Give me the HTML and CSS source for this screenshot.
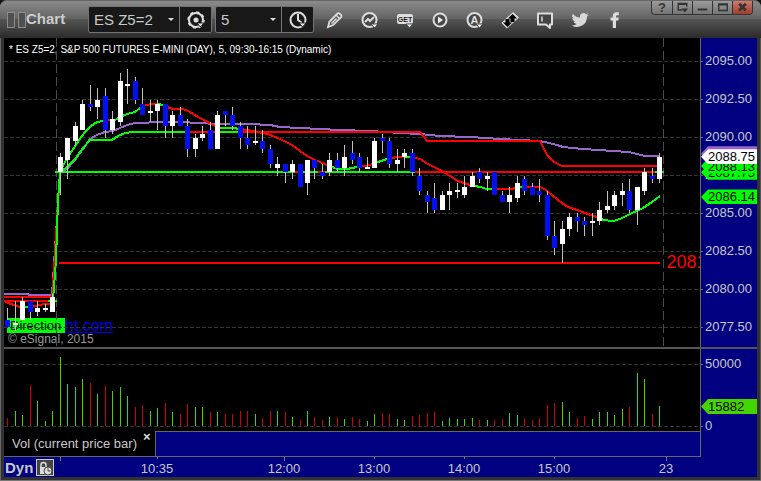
FILE: index.html
```html
<!DOCTYPE html>
<html lang="en">
<head>
    <meta charset="UTF-8">
    <meta name="viewport" content="width=device-width, initial-scale=1.0">
    <title>Chart</title>
    <link rel="stylesheet" href="styles.css">
</head>
<body>
    <div class="window">
        <header class="toolbar">
            <span class="grip"></span>
            <h1 class="title">Chart</h1>

            <div class="combo symbol">
                <select aria-label="Symbol">
                    <option>ES Z5=2</option>
                </select>
                <svg class="caret" viewBox="0 0 6 3"><path d="M0 0h6L3 3z"/></svg>
                <button class="combo-btn" aria-label="Symbol settings">
                    <svg class="icon" viewBox="0 0 20 20">
                        <circle cx="10" cy="10" r="7" fill="none" stroke="#ddd" stroke-width="2"/>
                        <circle cx="10" cy="10" r="8" fill="none" stroke="#ddd" stroke-width="1.500" stroke-dasharray="3.200 3.080"/>
                        <circle cx="10" cy="10" r="2.500" fill="#ddd"/>
                        <path d="M11 13h7l-3.500 4z" fill="#fff" stroke="#181818"/>
                    </svg>
                </button>
            </div>

            <div class="combo interval">
                <select aria-label="Interval">
                    <option>5</option>
                </select>
                <svg class="caret" viewBox="0 0 6 3"><path d="M0 0h6L3 3z"/></svg>
                <button class="combo-btn" aria-label="Time template">
                    <svg class="icon" viewBox="0 0 20 20">
                        <circle cx="10" cy="10" r="7.500" fill="none" stroke="#ddd" stroke-width="2"/>
                        <path d="M10 4v6l4 3" fill="none" stroke="#ddd" stroke-width="2"/>
                        <path d="M11 13h7l-3.500 4z" fill="#fff" stroke="#181818"/>
                    </svg>
                </button>
            </div>

            <nav class="tools">
                <button aria-label="Draw">
                    <svg class="icon" viewBox="0 0 20 20">
                        <path d="M3 17l1.500-5.500 8-8q1-.8 2 0l1.600 1.600q.8 1 0 2l-8 8z" fill="#555" stroke="#ddd" stroke-width="1.800"/>
                        <path d="M11 5l4 4M6.500 13.500l5-5" stroke="#ddd" stroke-width="1.500"/>
                    </svg>
                </button>
                <button aria-label="Studies">
                    <svg class="icon" viewBox="0 0 20 20">
                        <circle cx="9.500" cy="10" r="7" fill="#484848" stroke="#ddd" stroke-width="2"/>
                        <path d="M5 12l3-3 2 2 4-4" fill="none" stroke="#ddd" stroke-width="2"/>
                        <path d="M11 14h7l-3.500 4z" fill="#fff" stroke="#444"/>
                    </svg>
                </button>
                <button aria-label="Get study">
                    <svg class="icon" viewBox="0 0 20 20">
                        <rect x="2" y="4" width="16" height="10" rx="2" fill="#ddd"/>
                        <text x="10" y="12" class="glyph get">GET</text>
                        <path d="M11 14h7l-3.500 4z" fill="#fff" stroke="#444"/>
                    </svg>
                </button>
                <button aria-label="Play">
                    <svg class="icon" viewBox="0 0 20 20">
                        <circle cx="10" cy="10" r="6.500" fill="#484848" stroke="#ddd" stroke-width="2"/>
                        <path d="M8 6.500v7l5-3.500z" fill="#eee"/>
                    </svg>
                </button>
                <button aria-label="Alerts">
                    <svg class="icon" viewBox="0 0 20 20">
                        <circle cx="9.500" cy="10" r="7" fill="#484848" stroke="#ddd" stroke-width="2"/>
                        <text x="9.500" y="14" class="glyph letter">A</text>
                        <path d="M11 14h7l-3.500 4z" fill="#fff" stroke="#444"/>
                    </svg>
                </button>
                <button aria-label="Trade">
                    <svg class="icon" viewBox="0 0 20 20">
                        <path d="M2.500 13L13 3l5 4.500L7 17.500z" fill="#ccc" stroke="#ddd" stroke-width="1.500" stroke-linejoin="round"/>
                        <path d="M12.500 4l4.500 4.500h-2.500v3.500h-4v-3.500H8zM7.500 17L3 12.500h2.500V9h4v3.500H12z" fill="#000"/>
                    </svg>
                </button>
                <button aria-label="Comment">
                    <svg class="icon" viewBox="0 0 20 20">
                        <path d="M3 3.500h14v11h-2v3.500l-4-3.500H3z" fill="#444" stroke="#ddd" stroke-width="2" stroke-linejoin="round"/>
                        <path d="M7 6.500v5" stroke="#ddd" stroke-width="1.500"/>
                    </svg>
                </button>
                <button aria-label="Twitter">
                    <svg class="icon" viewBox="0 0 24 24">
                        <path fill="#d8d8d8" d="M22.500 5.600c-.8.400-1.600.6-2.400.7.900-.5 1.500-1.300 1.900-2.300-.8.500-1.700.8-2.700 1a4.200 4.200 0 0 0-7.200 3.900C8.600 8.700 5.500 7 3.400 4.400a4.200 4.200 0 0 0 1.300 5.700c-.7 0-1.300-.2-1.900-.5 0 2 1.400 3.800 3.400 4.200-.6.200-1.300.2-1.900.1.500 1.700 2.100 2.900 3.900 2.900A8.500 8.500 0 0 1 2 18.500a12 12 0 0 0 18.400-10.700c.8-.6 1.600-1.300 2.100-2.200z"/>
                    </svg>
                </button>
                <button aria-label="Facebook">
                    <svg class="icon" viewBox="0 0 20 20">
                        <path fill="#ddd" d="M7.800 18v-7.500H5.500v-3h2.300V6c0-2.700 1.500-3.800 3.500-3.800h2.500v3h-1.600c-.8 0-1.200.4-1.200 1.100v1.200h2.700l-.3 3H11V18z"/>
                    </svg>
                </button>
            </nav>

            <div class="controls">
                <button aria-label="Help">?</button>
                <button aria-label="Dock">
                    <svg viewBox="0 0 20 13"><path d="M10 9.500H5.500v-7h9V6M5 3.500h10" fill="none" stroke="#333" stroke-width="1.500"/><path d="M9 8h7l-3.500 4z" fill="#333"/></svg>
                </button>
                <button aria-label="Minimize">
                    <svg viewBox="0 0 20 13"><path d="M5 8h10v2H5z" fill="#333"/></svg>
                </button>
                <button aria-label="Maximize">
                    <svg viewBox="0 0 20 13"><path d="M6 3h9v7H6zM6 4h9" fill="none" stroke="#333" stroke-width="1.500"/></svg>
                </button>
                <button class="close" aria-label="Close">
                    <svg viewBox="0 0 20 13"><path d="M6.500 3l7 7M13.500 3l-7 7" stroke="#333" stroke-width="3"/></svg>
                </button>
            </div>
        </header>

        <main class="chart">
            <section class="plot price-plot">
                <p class="legend">* ES Z5=2, S&amp;P 500 FUTURES E-MINI (DAY), 5, 09:30-16:15 (Dynamic)</p>
                <div class="footnote">
                    <div class="tagline"><span class="direction">Direction</span><a href="#">ht.com</a></div>
                    <small>© eSignal, 2015</small>
                </div>
                <span class="low-label">2081</span>
                <svg id="price" viewBox="4 38 696 309" preserveAspectRatio="none"></svg>
            </section>
            <aside class="axis price-axis">
                <span>2095.00</span>
                <span>2092.50</span>
                <span>2090.00</span>
                <span>2087.50</span>
                <span>2085.00</span>
                <span>2082.50</span>
                <span>2080.00</span>
                <span>2077.50</span>
                <b class="tag tag-open">2087.75</b>
                <b class="tag tag-mid">2088.13</b>
                <b class="tag tag-avg"></b>
                <b class="tag tag-last">2088.75</b>
                <b class="tag tag-ma">2086.14</b>
            </aside>

            <div class="splitter"></div>

            <section class="plot">
                <svg id="volume" viewBox="4 349 696 82" preserveAspectRatio="none"></svg>
            </section>
            <aside class="axis volume-axis">
                <span>50000</span>
                <span>0</span>
                <b class="tag tag-volume">15882</b>
            </aside>

            <div class="tabs">
                <div class="tab">Vol (current price bar)<button aria-label="Close tab">×</button></div>
            </div>
            <div class="corner"></div>

            <footer class="time-axis">
                <div class="mode">
                    <strong>Dyn</strong>
                    <button aria-label="Lock time">
                        <svg viewBox="0 0 16 16">
                            <path d="M4 8V5a2.500 2.500 0 0 1 5 0v2" fill="none" stroke="#ddd" stroke-width="1.500"/>
                            <path d="M3 7h6v7H3z" fill="#ddd"/>
                            <circle cx="11" cy="11" r="4" fill="#ddd" stroke="#444"/>
                            <path d="M11 8.500V11h2.500" fill="none" stroke="#444"/>
                        </svg>
                    </button>
                </div>
                <span class="time">10:35</span>
                <span class="time t2 long">12:00</span>
                <span class="time">13:00</span>
                <span class="time">14:00</span>
                <span class="time">15:00</span>
                <span class="time t6 long">23</span>
            </footer>
        </main>
    </div>

    <script src="chart.js"></script>
</body>
</html>
```

FILE: styles.css
```css
* {
    box-sizing: border-box;
}
body {
    margin: 0;
    background: #111;
    font-family: "Liberation Sans", Arial, sans-serif;
    font-size: 13px;
    color: #c8c8c8;
}
button {
    padding: 0;
    border: 0;
    background: none;
    color: inherit;
    font: inherit;
    cursor: pointer;
}
svg {
    display: block;
}
.window {
    display: flex;
    flex-direction: column;
    height: 100vh;
    padding: 0 4px 3px;
    background: #323232;
    border-bottom: 1px solid #777;
    border-radius: 7px 7px 0 0;
    box-shadow: inset 1px 0 #666, inset -1px 0 #555;
}

/* toolbar */
.toolbar {
    display: flex;
    align-items: center;
    height: 38px;
    margin: 0 -4px;
    padding-left: 7px;
    background: linear-gradient(#8a8a8a, #626262 50%, #545454 50%, #2b2b2b);
    border-top: 1px solid #666;
    border-radius: 7px 7px 0 0;
}
.grip {
    display: flex;
    gap: 3px;
}
.grip::before,
.grip::after {
    content: "";
    width: 6px;
    height: 14px;
    border: 1px solid #8e8e8e;
    background: #505050;
}
.title {
    flex: none;
    width: 66px;
    margin: 0;
    padding-left: 4px;
    font-size: 15px;
    line-height: 36px;
    color: #ccc;
}
.grip + .title {
    width: 62px;
    padding-left: 0;
    line-height: 34px;
    padding-bottom: 2px;
}
.combo {
    position: relative;
    display: flex;
    flex: none;
    height: 27px;
    margin: 0 3px 0 0;
    border: 1px solid #747474;
    border-radius: 2px;
    background: #181818;
}
.symbol {
    width: 124px;
}
.interval {
    width: 99px;
}
.combo select {
    flex: 1;
    min-width: 0;
    padding: 0 5px;
    border: 0;
    background: none;
    appearance: none;
    color: #c8c8c8;
    font: 15px "Liberation Sans", Arial, sans-serif;
}
.caret {
    position: absolute;
    right: 37px;
    top: 11px;
    width: 6px;
    height: 3px;
    fill: #ddd;
    pointer-events: none;
}
.combo-btn {
    display: flex;
    align-items: center;
    justify-content: center;
    width: 32px;
    border-left: 1px solid #747474;
}
.icon {
    width: 20px;
    height: 20px;
}
.tools {
    display: flex;
}
.tools button {
    display: flex;
    justify-content: center;
    width: 35px;
}
.glyph {
    font-weight: bold;
    text-anchor: middle;
}
.get {
    font-size: 7px;
    fill: #222;
}
.letter {
    font-size: 11px;
    fill: #ddd;
}
.controls {
    display: flex;
    align-self: flex-start;
    margin: 0 8px 0 auto;
    border: 1px solid #333;
    border-top: 0;
    border-radius: 0 0 4px 4px;
    overflow: hidden;
    background: linear-gradient(#9b9b9b, #757575);
}
.controls button {
    width: 20px;
    height: 13px;
    color: #333;
    font-weight: bold;
    line-height: 13px;
}
.controls button + button {
    border-left: 1px solid #333;
}
.controls .close {
    background: linear-gradient(#cf7b6c, #a23c2c);
}

/* chart panes */
.chart {
    flex: 1;
    display: grid;
    grid-template-columns: 1fr 57px;
    grid-template-rows: 1fr 2px 82px 26px 20px;
    min-height: 0;
    background: #000080;
}
.plot {
    position: relative;
    overflow: hidden;
    min-height: 0;
    background: #000;
}
.plot > svg {
    position: absolute;
    inset: 0;
    width: 100%;
    height: 100%;
    pointer-events: none;
}
.splitter {
    grid-column: 1 / -1;
    background: #555;
}
.legend {
    margin: 0;
    padding: 6px 5px;
    color: #fff;
    font-size: 10px;
    line-height: 12px;
}
.footnote {
    position: absolute;
    left: 3px;
    bottom: 2px;
}
.tagline {
    display: flex;
    line-height: 15px;
}
.direction {
    width: 58px;
    padding-left: 3px;
    background: #0f0;
    color: #000;
}
.tagline a {
    color: #0000e0;
    font-size: 16px;
}
.footnote small {
    display: block;
    font-size: 12px;
    line-height: 12px;
    padding-left: 1px;
    color: #999;
}
.low-label {
    position: absolute;
    left: 95.2%;
    top: 69.4%;
    color: #f00;
    font-size: 18px;
    line-height: 20px;
}

/* axes */
.axis {
    position: relative;
    border-left: 1px solid #666;
}
.axis > span {
    display: flex;
    align-items: center;
    padding-left: 4px;
    line-height: 10px;
}
.price-axis {
    display: grid;
    grid-auto-rows: 1fr;
    padding: 4px 0 1px;
}
.volume-axis {
    display: flex;
    flex-direction: column;
    justify-content: space-between;
    padding-top: 10px;
}
.axis > span::before {
    content: "";
    width: 2px;
    height: 1px;
    margin: 0 2px 0 -4px;
    background: #666;
}
.tag {
    position: absolute;
    left: 0;
    right: 0;
    height: 15px;
    padding-left: 7px;
    background: #0f0;
    color: #000;
    font-weight: normal;
    line-height: 15px;
    clip-path: polygon(0 50%, 7px 0, 100% 0, 100% 100%, 7px 100%);
}
.tag-open {
    top: 41%;
}
.tag-mid {
    top: 39%;
}
.tag-avg {
    top: 35%;
    background: #9966cc;
}
.tag-last {
    top: 36%;
    background: #fff;
}
.tag-ma {
    top: 49%;
}
.tag-volume {
    top: 50px;
    background: #44d400;
}

/* study tabs */
.tabs {
    display: flex;
    border-bottom: 1px solid #666;
    box-shadow: inset 0 1px #666;
}
.tab {
    display: flex;
    gap: 6px;
    padding-left: 8px;
    width: 152px;
    background: #000;
    border-right: 1px solid #666;
    line-height: 26px;
}
.tab button {
    align-self: flex-start;
    color: #ddd;
    font-weight: bold;
    line-height: 12px;
}
.corner {
    border-left: 1px solid #666;
}

/* time axis, column widths follow the bar spacing */
.time-axis {
    grid-column: 1 / -1;
    display: grid;
    grid-template-columns: 108fr 90fr 37fr 90fr 90fr 90fr 90fr 22fr 90fr 46fr;
}
.mode {
    position: relative;
    display: flex;
    align-items: center;
    gap: 3px;
    padding-left: 1px;
    font-size: 15px;
}
.mode button {
    width: 18px;
    height: 17px;
    border: 1px solid #ccc;
    background: #444;
}
.time {
    position: relative;
    padding-top: 4px;
    text-align: center;
    line-height: 16px;
}
.t2 {
    grid-column: 4;
}
.t6 {
    grid-column: 9;
}
.time::before,
.mode::after {
    content: "";
    position: absolute;
    left: 50%;
    top: 0;
    width: 1px;
    height: 2px;
    background: #777;
}
.mode::after {
    left: 52%;
    height: 4px;
}
.long::before {
    height: 4px;
}
```

FILE: chart.js
```js
// high, body top, body bottom, low, 1 = up bar / 0 = down bar
const bars = [
    [308,320,327,327,0], [301,323,325,331,1], [297,301,320,320,1], [301,301,312,320,0],
    [301,308,312,316,1], [304,308,310,312,1], [294,297,312,312,1], [153,157,172,195,1],
    [138,138,160,179,1], [122,126,141,145,1], [100,104,130,130,1], [85,104,107,111,0],
    [88,100,107,119,1], [88,96,130,138,0], [111,119,130,134,1], [73,81,122,126,1],
    [69,84,86,104,1], [77,81,100,104,0], [88,104,115,115,0], [100,111,113,122,1],
    [100,104,111,130,1], [104,104,126,138,0], [111,115,126,138,1], [107,115,126,126,0],
    [119,126,149,157,0], [134,138,149,157,1], [126,134,138,141,1], [122,130,149,149,0],
    [111,115,149,149,1], [111,111,115,126,0], [107,115,126,130,0], [122,126,138,149,0],
    [126,138,145,149,0], [126,141,143,145,1], [130,141,149,153,0], [145,149,164,168,0],
    [157,164,168,176,1], [164,164,172,183,0], [160,164,172,179,1], [164,164,187,187,0],
    [160,160,183,195,1], [160,160,168,179,0], [164,172,176,179,0], [153,160,172,176,1],
    [153,160,168,172,0], [145,157,168,176,1], [141,153,160,164,0], [153,157,168,172,0],
    [157,167,169,169,1], [138,141,168,168,1], [134,138,141,153,0], [138,141,164,168,0],
    [149,160,164,172,1], [149,153,157,168,1], [149,153,172,176,0], [168,176,191,195,0],
    [191,195,202,213,0], [183,198,210,213,0], [191,195,210,210,1], [183,191,195,210,1],
    [183,190,192,198,1], [176,187,195,198,1], [172,176,187,187,1], [168,172,179,183,0],
    [172,176,179,191,1], [172,172,195,195,0], [191,195,202,202,0], [187,195,202,213,1],
    [176,183,198,202,1], [176,179,191,195,0], [183,187,195,195,0], [179,191,195,202,0],
    [191,195,236,240,0], [221,236,248,255,0], [221,229,244,263,1], [213,217,229,236,1],
    [213,217,221,232,0], [217,221,225,236,0], [213,221,223,236,1], [202,210,221,225,1],
    [191,206,210,213,1], [191,195,206,210,1], [183,191,195,206,1], [179,191,210,213,0],
    [187,187,210,225,1], [168,172,191,195,1], [168,176,179,183,0], [153,157,179,183,1]
];

// top of each volume bar, negative = down bar
const volume = [
    -418,411,415,-385,401,421,411,357,384,387,379,-383,394,-386,391,387,396,-407,-405,411,408,-403,
    412,-414,-404,407,407,-412,412,-414,-414,-411,-411,414,-418,-411,411,-412,417,-420,411,-417,-420,417,
    -417,419,-417,-419,421,414,-413,-414,419,420,-416,-415,-413,-412,421,418,419,419,418,-420,420,-420,
    -419,413,415,-418,-420,-418,-405,-403,402,412,-418,-416,419,412,412,415,409,-407,373,379,-414,406
];

const RED = '#f00', GREEN = '#0f0', PURPLE = '#9966cc';

// indicator lines, cut where the colour changes
const lines = [
    [PURPLE, '4,294 28,294 29,295 52,295 60,172 67,169 75,160 83,149 90,139 97,135 105,132 113,131 120,128 127,125 135,123 142,123 157,122 180,122 200,123 215,124 250,124 270,125 280,127 300,128 320,129 340,130 370,131 400,133 420,134 440,136 470,137 500,139 540,141 549,143 557,145 563,147 583,149 629,152 637,154 645,156 660,156'],
    [RED, '4,297 52,297'],
    [RED, '4,301 52,301 60,172'],
    [RED, '4,301 8,303 14,305 20,307 30,307 36,306 44,304 52,304'],
    [GREEN, '24,307 31,307'],
    [GREEN, '48,301 57,301'],
    [RED, '186,132 217,132'],
    [RED, '240,132 420,132 427,141 540,141 547,155 554,162 562,166 660,166'],
    [GREEN, '53,300 56,260 58,200 60,172 67,167 75,159 83,148 90,140 112,140 118,136 125,133 133,132 186,132'],
    [GREEN, '217,132 240,132'],
    [GREEN, '55,172 415,172'],
    [RED, '295,172 303,172'],
    [RED, '318,172 325,172'],
    [RED, '415,172 655,172'],
    [GREEN, '655,172 664,172'],
    [RED, '59,263 660,263'],
    [GREEN, '60,172 64,164 67,158 72,151 79,140 85,132 91,126 97,122 103,121 107,120'],
    [RED, '107,120 112,120'],
    [GREEN, '112,120 115,120 120,117 127,114 135,112 140,108 145,105'],
    [RED, '145,105 153,104 158,104'],
    [GREEN, '158,104 163,105 167,107'],
    [RED, '167,107 173,109 183,109 188,111 200,118 213,125 217,127'],
    [GREEN, '217,127 223,128 233,128 240,129'],
    [RED, '240,129 247,130 257,132 268,134 280,139 292,145 300,151 307,156 315,160 325,164 330,166'],
    [GREEN, '330,166 337,169 347,169 357,167'],
    [RED, '357,167 365,166 373,164'],
    [GREEN, '373,164 378,162 387,159'],
    [RED, '387,159 397,157 404,157'],
    [GREEN, '404,157 412,157'],
    [RED, '412,157 420,159 428,164 440,170 450,176 458,181 470,185'],
    [GREEN, '470,185 480,187 487,189 497,189'],
    [RED, '497,189 512,189 518,187'],
    [GREEN, '518,187 524,187'],
    [RED, '524,187 540,187 546,190 553,196 562,203 568,207 577,210 585,213 600,218'],
    [GREEN, '600,218 603,220 613,221 620,219 630,214 643,208 652,202 660,196']
];

function add(svg, name, attrs) {
    const el = document.createElementNS('http://www.w3.org/2000/svg', name);
    for (const key in attrs) el.setAttribute(key, attrs[key]);
    svg.appendChild(el);
}

function rect(svg, x, y, width, height, fill) {
    add(svg, 'rect', { x, y, width, height, fill });
}

function gridLine(svg, points, dash, stroke) {
    add(svg, 'polyline', { points, stroke, 'stroke-dasharray': dash });
}

function barX(i) {
    return Math.floor(7.9 + 7.49 * i);
}

const price = document.getElementById('price');
const vol = document.getElementById('volume');

// grid
for (let y = 61.5; y < 347; y += 38) {
    gridLine(price, `4,${y} 700,${y}`, '4 2', '#333');
}
for (const x of [56.5, 663.5]) {
    gridLine(price, `${x},38 ${x},347`, '9 4', '#4a4a4a');
}
for (const y of [364.5, 426.5]) {
    gridLine(vol, `4,${y} 700,${y}`, '4 2', '#333');
}

for (const [stroke, points] of lines) {
    add(price, 'polyline', { points, stroke, fill: 'none', 'stroke-width': 2, 'shape-rendering': 'crispEdges' });
}

bars.forEach(([high, top, bottom, low, up], i) => {
    const x = barX(i);
    rect(price, x, high, 1, low - high, '#c0c0c0');
    rect(price, x - 2, top, 5, bottom - top, up ? '#fff' : '#0010f0');
});

volume.forEach((v, i) => {
    const top = Math.abs(v);
    rect(vol, barX(i), top, 1, 426 - top, v > 0 ? '#44d400' : '#d00000');
});
```
